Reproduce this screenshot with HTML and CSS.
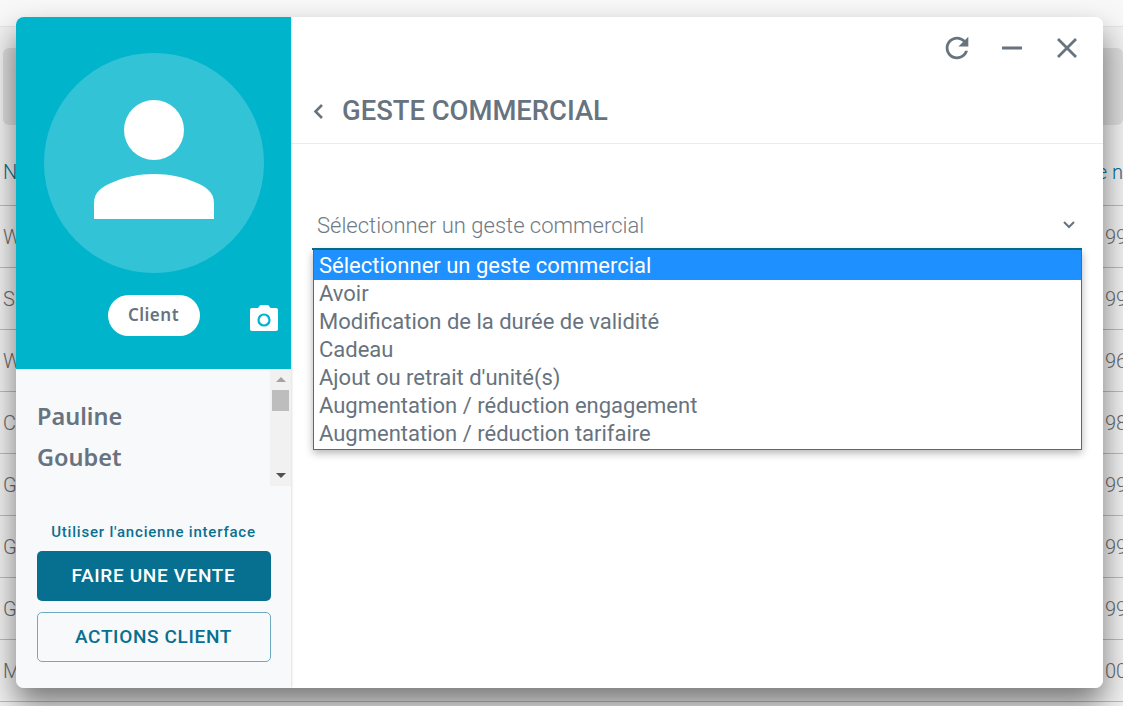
FILE: index.html
```html
<!DOCTYPE html>
<html>
  <head>
    <title>Geste commercial</title>
    <link rel="stylesheet" href="styles.css">
  </head>

  <body>
    <div class="top-bar"></div>
    <div class="tool-box"></div>
    <div class="table-head"><span>N</span><span class="right-cell">de n</span></div>
    <div class="table-row"><span>W</span><span class="right-cell">99</span></div>
    <div class="table-row"><span>S</span><span class="right-cell">99</span></div>
    <div class="table-row"><span>W</span><span class="right-cell">96</span></div>
    <div class="table-row"><span>C</span><span class="right-cell">98</span></div>
    <div class="table-row"><span>G</span><span class="right-cell">99</span></div>
    <div class="table-row"><span>G</span><span class="right-cell">99</span></div>
    <div class="table-row"><span>G</span><span class="right-cell">99</span></div>
    <div class="table-row"><span>M</span><span class="right-cell">00</span></div>

    <div class="modal">
      <div class="side">
        <div class="side-top">
          <div class="avatar">
            <svg width="120" height="120" viewBox="0 0 120 120">
              <circle cx="60" cy="30" r="30" fill="#fff"/>
              <path d="M0 119V103C0 92 8 87 17 83C30 77 45 74 60 74C75 74 90 77 103 83C112 87 120 92 120 103V119Z" fill="#fff"/>
            </svg>
          </div>
          <div class="badge">Client</div>
          <svg class="camera" width="28" height="26" viewBox="0 0 28 26">
            <path d="M8 3L9.500 1C10 .4 10.500 0 11.500 0H17C18 0 18.500 .4 19 1L20.500 3H26C27.200 3 28 3.800 28 5V24C28 25.200 27.200 26 26 26H2C.8 26 0 25.200 0 24V5C0 3.800 .8 3 2 3Z" fill="#fff"/>
            <circle cx="14" cy="15" r="5.500" fill="none" stroke="#00b4cc" stroke-width="2.200"/>
          </svg>
        </div>
        <div class="name-box">
          <div class="name-text">
            <p>Pauline</p>
            <p>Goubet</p>
          </div>
          <div class="scroll-bar">
            <div class="arrow-up"></div>
            <div class="scroll-thumb"></div>
            <div class="arrow-down"></div>
          </div>
        </div>
        <div class="side-actions">
          <div class="old-link">Utiliser l'ancienne interface</div>
          <div class="btn btn-main">FAIRE UNE VENTE</div>
          <div class="btn btn-line">ACTIONS CLIENT</div>
        </div>
      </div>

      <div class="main">
        <div class="main-head">
          <div class="icon-row">
            <svg class="icon-refresh" width="34" height="34" viewBox="0 0 24 24"><path fill="#67737e" d="M17.650 6.350C16.200 4.900 14.210 4 12 4c-4.420 0-7.990 3.580-7.990 8s3.570 8 7.990 8c3.730 0 6.840-2.550 7.730-6h-2.080c-.82 2.330-3.040 4-5.650 4-3.310 0-6-2.690-6-6s2.690-6 6-6c1.660 0 3.140.69 4.220 1.780L13 11h7V4l-2.350 2.350z"/></svg>
            <svg width="22" height="22" viewBox="0 0 22 22"><path d="M1 11H21" stroke="#67737e" stroke-width="3"/></svg>
            <svg width="22" height="22" viewBox="0 0 22 22"><path d="M2 2L20 20M20 2L2 20" stroke="#67737e" stroke-width="2.800"/></svg>
          </div>
          <div class="title-row">
            <svg width="12" height="16" viewBox="0 0 12 16"><path d="M10 2L3.500 8.500L10 15" fill="none" stroke="#67737e" stroke-width="2.600"/></svg>
            <h1 class="title">GESTE COMMERCIAL</h1>
          </div>
        </div>
        <div class="form-area">
          <div class="select-line">
            <span>Sélectionner un geste commercial</span>
            <svg width="14" height="10" viewBox="0 0 14 10"><path d="M2 2L7 7L12 2" fill="none" stroke="#67737e" stroke-width="2"/></svg>
          </div>
          <div class="option-list">
            <div class="option option-on">Sélectionner un geste commercial</div>
            <div class="option">Avoir</div>
            <div class="option">Modification de la durée de validité</div>
            <div class="option">Cadeau</div>
            <div class="option">Ajout ou retrait d'unité(s)</div>
            <div class="option">Augmentation / réduction engagement</div>
            <div class="option">Augmentation / réduction tarifaire</div>
          </div>
        </div>
      </div>
    </div>
  </body>
</html>
```

FILE: styles.css
```css
html, body {
  height: 100%;
}
body {
  margin: 0;
  overflow: hidden;
  background-color: #f1f1f1;
  font-family: Roboto, sans-serif;
}
.top-bar {
  height: 26px;
  background-color: #f8f8f8;
  border-bottom: 1px solid #e4e4e4;
}
.tool-box {
  height: 77px;
  margin: 21px 0 13px 3px;
  background-color: #dcdcdc;
  border-radius: 6px;
}
.table-head,
.table-row {
  display: flex;
  justify-content: space-between;
  align-items: center;
  height: 61px;
  padding-left: 3px;
  border-bottom: 1px solid #bbb;
  font-size: 20px;
  font-weight: 300;
  color: #6b6b6b;
}
.table-head {
  height: 67px;
  color: #076f8f;
}
.right-cell {
  width: 18px;
  overflow: hidden;
  white-space: nowrap;
}
.table-head .right-cell {
  width: auto;
}
.modal {
  position: absolute;
  left: 16px;
  top: 17px;
  width: 1087px;
  height: 671px;
  display: flex;
  background-color: #fff;
  border-radius: 8px;
  overflow: hidden;
  box-shadow: 0 16px 30px rgba(0, 0, 0, 0.5);
}
.side {
  position: relative;
  z-index: 1;
  width: 275px;
  flex-shrink: 0;
  background-color: #f7f9fb;
  box-shadow: 1px 0 2px rgba(0, 0, 0, 0.12);
}
.side-top {
  position: relative;
  height: 352px;
  padding-top: 36px;
  box-sizing: border-box;
  display: flex;
  flex-direction: column;
  align-items: center;
  background-color: #00b4cc;
}
.avatar {
  width: 220px;
  height: 220px;
  display: flex;
  align-items: center;
  justify-content: center;
  border-radius: 50%;
  background-color: #33c3d6;
}
.avatar svg {
  margin-top: -7px;
}
.badge {
  margin-top: 22px;
  width: 92px;
  height: 41px;
  line-height: 40px;
  text-align: center;
  border-radius: 21px;
  background-color: #fff;
  font-family: 'Noto Sans', sans-serif;
  font-size: 17px;
  font-weight: 600;
  letter-spacing: 0.5px;
  color: #67737e;
}
.camera {
  position: absolute;
  left: 234px;
  top: 288px;
}
.name-box {
  display: flex;
  height: 117px;
}
.name-text {
  flex: 1;
  padding: 27px 0 0 21px;
}
.name-text p {
  margin: 0;
  height: 41px;
  line-height: 41px;
  font-family: 'Noto Sans', sans-serif;
  font-size: 23.5px;
  font-weight: 600;
  color: #67737e;
}
.scroll-bar {
  width: 21px;
  display: flex;
  flex-direction: column;
  align-items: center;
  background-color: #f1f1f1;
}
.arrow-up {
  margin-top: 8px;
  border-left: 5px solid transparent;
  border-right: 5px solid transparent;
  border-bottom: 5px solid #a3a3a3;
}
.scroll-thumb {
  width: 17px;
  height: 21px;
  margin-top: 8px;
  background-color: #bdbdbd;
}
.arrow-down {
  margin-top: auto;
  margin-bottom: 8px;
  border-left: 5px solid transparent;
  border-right: 5px solid transparent;
  border-top: 5px solid #505050;
}
.side-actions {
  display: flex;
  flex-direction: column;
  align-items: center;
  padding-top: 37px;
}
.old-link {
  margin-bottom: 10px;
  font-size: 15px;
  font-weight: 500;
  line-height: 18px;
  letter-spacing: 0.8px;
  color: #0a7092;
}
.btn {
  width: 234px;
  height: 50px;
  box-sizing: border-box;
  line-height: 49px;
  text-align: center;
  border-radius: 5px;
  font-size: 19px;
  font-weight: 500;
  letter-spacing: 0.65px;
}
.btn-main {
  background-color: #076f8f;
  color: #fff;
}
.btn-line {
  margin-top: 11px;
  line-height: 47px;
  border: 1px solid #6fabc0;
  color: #076f8f;
}
.main {
  flex: 1;
  background-color: #fff;
}
.main-head {
  height: 127px;
  box-sizing: border-box;
  border-bottom: 1px solid #ececec;
}
.icon-row {
  display: flex;
  justify-content: flex-end;
  align-items: center;
  gap: 33px;
  height: 62px;
  padding-right: 25px;
}
.icon-refresh {
  margin-right: -6px;
}
.title-row {
  display: flex;
  align-items: center;
  gap: 18px;
  padding-left: 21px;
  height: 64px;
}
.title {
  margin: 0;
  font-size: 27.4px;
  font-weight: 500;
  color: #67737e;
}
.form-area {
  padding: 0 21px;
}
.select-line {
  display: flex;
  justify-content: space-between;
  align-items: center;
  height: 106px;
  box-sizing: border-box;
  padding: 58px 6px 0 5px;
  border-bottom: 2px solid #076f8f;
  font-size: 22px;
  font-weight: 300;
  color: #6f7a84;
}
.option-list {
  margin-left: 1px;
  height: 200px;
  box-sizing: border-box;
  border: 1px solid #666;
  border-top: 0;
  background-color: #fff;
  box-shadow: 0 3px 8px rgba(0, 0, 0, 0.3);
}
.option {
  height: 28px;
  line-height: 28px;
  padding-left: 5px;
  font-size: 22px;
  color: #67737e;
}
.option-on {
  height: 30px;
  line-height: 31px;
  background-color: #1e90ff;
  color: #fff;
}
```
